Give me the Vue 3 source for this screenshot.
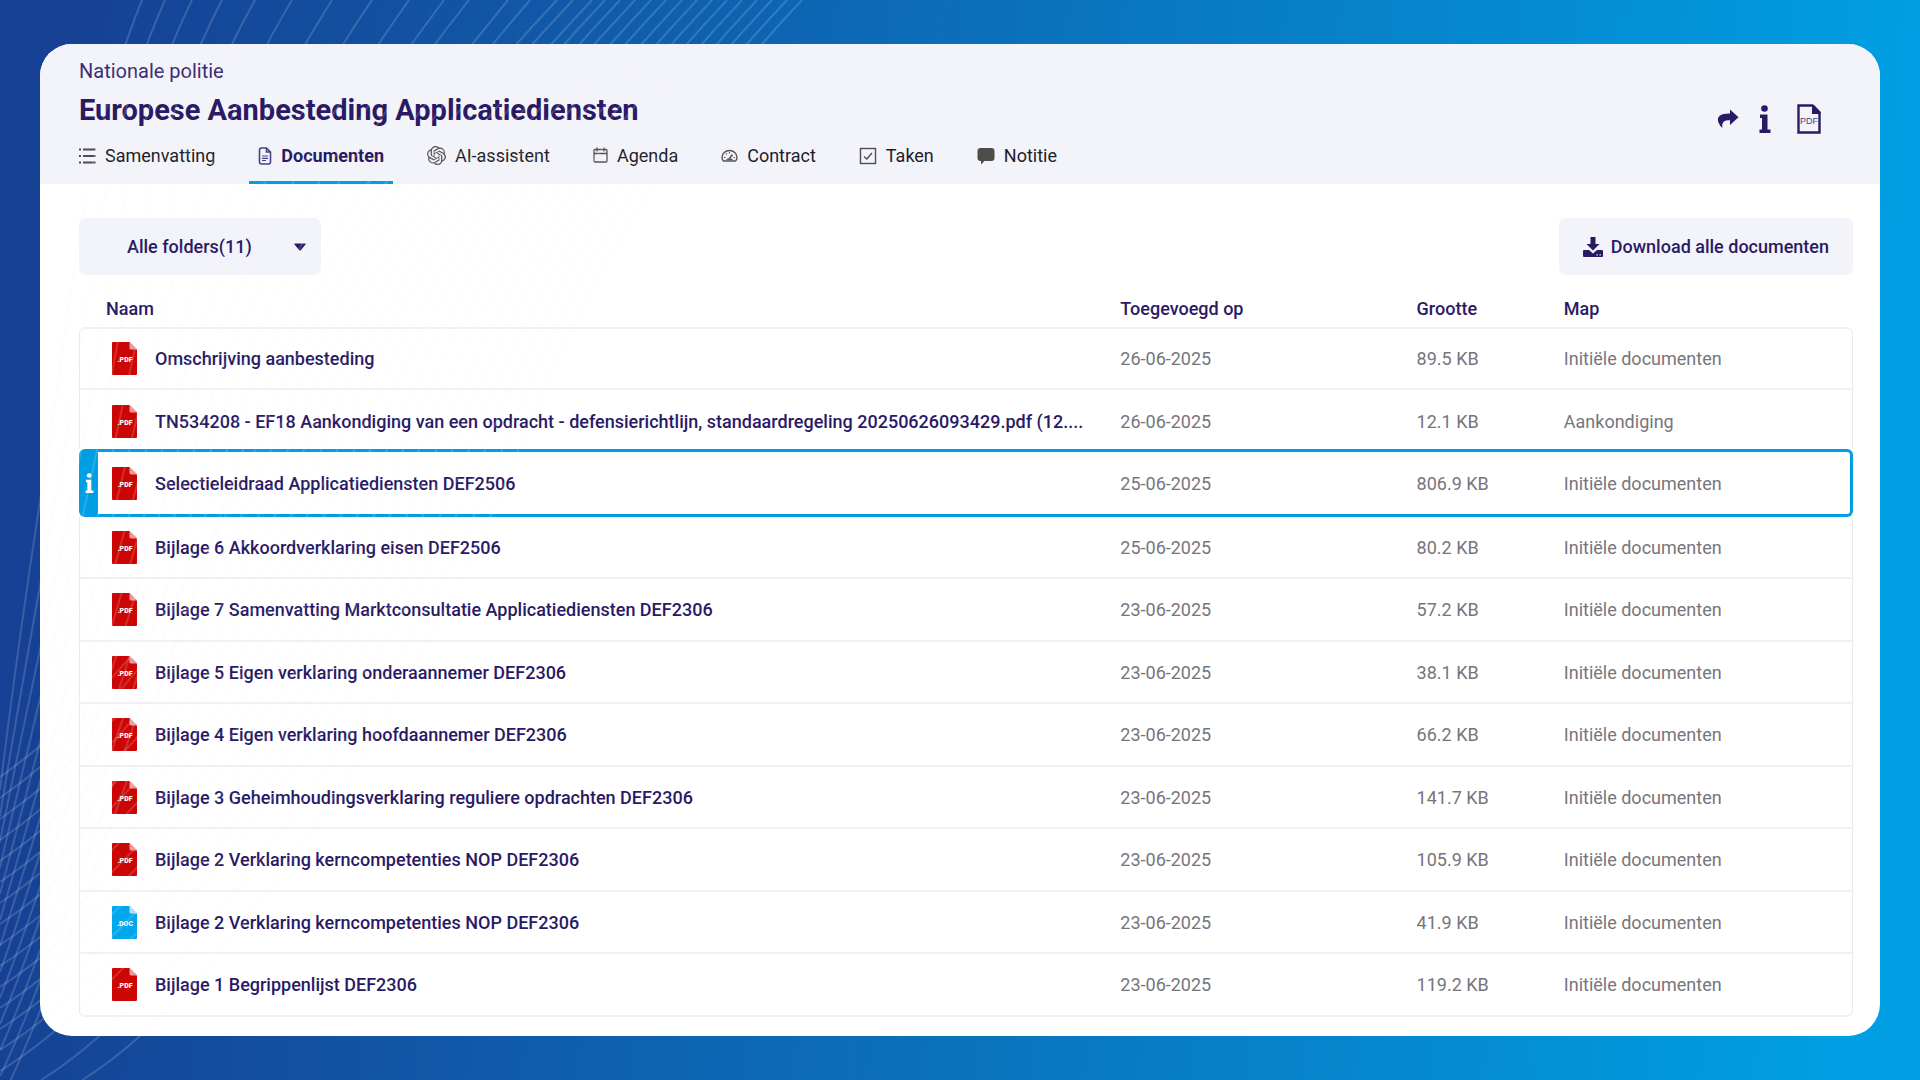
<script setup>
import { ref } from 'vue'

const folder = ref('all')

const tabs = [
  { id: 'list', label: 'Samenvatting' },
  { id: 'doc', label: 'Documenten', active: true },
  { id: 'ai', label: 'AI-assistent' },
  { id: 'agenda', label: 'Agenda' },
  { id: 'gauge', label: 'Contract' },
  { id: 'check', label: 'Taken' },
  { id: 'note', label: 'Notitie' },
]

const initial = 'Initiële documenten'
const files = [
  { name: 'Omschrijving aanbesteding', date: '26-06-2025', size: '89.5 KB', map: initial },
  { name: 'TN534208 - EF18 Aankondiging van een opdracht - defensierichtlijn, standaardregeling 20250626093429.pdf (12....', date: '26-06-2025', size: '12.1 KB', map: 'Aankondiging' },
  { name: 'Selectieleidraad Applicatiediensten DEF2506', date: '25-06-2025', size: '806.9 KB', map: initial, selected: true },
  { name: 'Bijlage 6 Akkoordverklaring eisen DEF2506', date: '25-06-2025', size: '80.2 KB', map: initial },
  { name: 'Bijlage 7 Samenvatting Marktconsultatie Applicatiediensten DEF2306', date: '23-06-2025', size: '57.2 KB', map: initial },
  { name: 'Bijlage 5 Eigen verklaring onderaannemer DEF2306', date: '23-06-2025', size: '38.1 KB', map: initial },
  { name: 'Bijlage 4 Eigen verklaring hoofdaannemer DEF2306', date: '23-06-2025', size: '66.2 KB', map: initial },
  { name: 'Bijlage 3 Geheimhoudingsverklaring reguliere opdrachten DEF2306', date: '23-06-2025', size: '141.7 KB', map: initial },
  { name: 'Bijlage 2 Verklaring kerncompetenties NOP DEF2306', date: '23-06-2025', size: '105.9 KB', map: initial },
  { name: 'Bijlage 2 Verklaring kerncompetenties NOP DEF2306', date: '23-06-2025', size: '41.9 KB', map: initial, type: 'doc' },
  { name: 'Bijlage 1 Begrippenlijst DEF2306', date: '23-06-2025', size: '119.2 KB', map: initial },
]

// Decorative fan of curves: a steep family and a flatter one that crosses it.
const steepTops = [142, 165, 192, 222, 255, 292, 332, 372, 409, 444, 469, 508, 530]
const flatTops = [557, 573, 592, 605, 620, 635, 651, 666, 682, 697, 712, 727, 742, 757, 772, 787, 802]

const steep = steepTops.map((top, i) => {
  const t = i / 12
  const mid = 48 + 195 * t
  const s0 = 0.41 + 0.45 * t
  const sm = 0.16 + 0.18 * t
  const endY = 790 + 26 * i
  const s1 = 0.12 + 0.4 * t
  return curve(top, s0, mid, sm, 0, endY, s1)
})
const flat = flatTops.map((top, i) => {
  const t = i / 16
  const mid = 255 + 263 * t
  const endX = i < 15 ? 0 : (i - 14) * 41
  const endY = i < 15 ? 777 + 21 * i : 1080
  return curve(top, 0.95, mid, 0.38, endX, endY, 1.4 + 0.25 * t)
})
const lines = [...steep, ...flat]

function curve(top, s0, mid, sm, endX, endY, s1) {
  const h = 150
  const k = (endY - 450) / 3
  const e = Math.min(k, 90)
  const pts = [
    top - s0 * h, h, mid + sm * h, 450 - h, mid, 450,
    mid - sm * k, 450 + k, endX + s1 * e, endY - e, endX, endY,
  ].map(Math.round)
  return `M${top} 0C${pts.slice(0, 6).join(' ')}C${pts.slice(6).join(' ')}`
}
</script>

<template>
  <div class="page">
    <main class="card">
      <header class="head">
        <div class="head-main">
          <p class="org">Nationale politie</p>
          <h1 class="title">Europese Aanbesteding Applicatiediensten</h1>
          <nav class="tabs">
            <a v-for="tab in tabs" :key="tab.id" href="#" class="tab" :class="{ active: tab.active }">
              <svg v-if="tab.id === 'list'" width="17" height="18" viewBox="0 0 17 18" fill="none" stroke="#4d4d52" stroke-width="2">
                <path d="M4 2.5h12.500M4 9h12.500M4 15.500h12.500" />
                <path d="M0 2.500h2M0 9h2M0 15.500h2" />
              </svg>
              <svg v-else-if="tab.id === 'doc'" width="14" height="18" viewBox="0 0 14 18" fill="none" stroke="#4a4088" stroke-width="1.6">
                <path d="M1.500 3q0-2 2-2H8.500l4 4V15q0 2-2 2h-7q-2 0-2-2zM8.500 1v4h4" />
                <path d="M4 9h6M4 11.300h6M4 13.500h4" stroke-width="1.2" />
              </svg>
              <svg v-else-if="tab.id === 'ai'" width="19" height="19" viewBox="0 0 24 24" fill="#555559">
                <path d="M22.2819 9.8211a5.9847 5.9847 0 0 0-.5157-4.9108 6.0462 6.0462 0 0 0-6.5098-2.9A6.0651 6.0651 0 0 0 4.9807 4.1818a5.9847 5.9847 0 0 0-3.9977 2.9 6.0462 6.0462 0 0 0 .7427 7.0966 5.98 5.98 0 0 0 .511 4.9107 6.051 6.051 0 0 0 6.5146 2.9001A5.9847 5.9847 0 0 0 13.2599 24a6.0557 6.0557 0 0 0 5.7718-4.2058 5.9894 5.9894 0 0 0 3.9977-2.9001 6.0557 6.0557 0 0 0-.7475-7.0729zm-9.022 12.6081a4.4755 4.4755 0 0 1-2.8764-1.0408l.1419-.0804 4.7783-2.7582a.7948.7948 0 0 0 .3927-.6813v-6.7369l2.02 1.1686a.071.071 0 0 1 .038.052v5.5826a4.504 4.504 0 0 1-4.4945 4.4944zm-9.6607-4.1254a4.4708 4.4708 0 0 1-.5346-3.0137l.142.0852 4.783 2.7582a.7712.7712 0 0 0 .7806 0l5.8428-3.3685v2.3324a.0804.0804 0 0 1-.0332.0615L9.74 19.9502a4.4992 4.4992 0 0 1-6.1408-1.6464zM2.3408 7.8956a4.485 4.485 0 0 1 2.3655-1.9728V11.6a.7664.7664 0 0 0 .3879.6765l5.8144 3.3543-2.0201 1.1685a.0757.0757 0 0 1-.071 0l-4.8303-2.7865A4.504 4.504 0 0 1 2.3408 7.872zm16.5963 3.8558L13.1038 8.364 15.1192 7.2a.0757.0757 0 0 1 .071 0l4.8303 2.7913a4.4944 4.4944 0 0 1-.6765 8.1042v-5.6772a.79.79 0 0 0-.407-.667zm2.0107-3.0231l-.142-.0852-4.7735-2.7818a.7759.7759 0 0 0-.7854 0L9.409 9.2297V6.8974a.0662.0662 0 0 1 .0284-.0615l4.8303-2.7866a4.4992 4.4992 0 0 1 6.6802 4.66zM8.3065 12.863l-2.02-1.1638a.0804.0804 0 0 1-.038-.0567V6.0742a4.4992 4.4992 0 0 1 7.3757-3.4537l-.142.0805L8.704 5.459a.7948.7948 0 0 0-.3927.6813zm1.0976-2.3654l2.602-1.4998 2.6069 1.4998v2.9994l-2.5974 1.4997-2.6067-1.4997Z" />
              </svg>
              <svg v-else-if="tab.id === 'agenda'" width="15" height="17" viewBox="0 0 15 17" fill="none" stroke="#555559" stroke-width="1.3">
                <rect x="1" y="2.500" width="13" height="12.500" rx="1" />
                <path d="M1 6.500h13M4 .5v4M11 .5v4" />
              </svg>
              <svg v-else-if="tab.id === 'gauge'" width="17" height="17" viewBox="0 0 17 17" fill="none" stroke="#555559" stroke-width="1.4">
                <path d="M2.500 14Q1 12.500 1 10.500a7.500 7 0 0 1 15 0Q16 12.500 14.500 14z" />
                <path d="M5.500 12.500h6M8 12l3.500-4.500" stroke-width="1.600" />
                <path d="M3 10.500h1.500M5 6.500l.8.800M8.500 5v1.500M12.500 10.500H14" stroke-width="1.100" />
              </svg>
              <svg v-else-if="tab.id === 'check'" width="18" height="18" viewBox="0 0 18 18" fill="none" stroke="#4d4d52" stroke-width="1.4">
                <rect x="1.500" y="1.500" width="15" height="15" />
                <path d="M5 9.500l2.800 2.500L13 6" />
              </svg>
              <svg v-else width="18" height="18" viewBox="0 0 18 18" fill="#4f4d4a">
                <path d="M3.500 1h11Q17.500 1 17.500 4v7q0 3-3 3H7.500L4 17.500V14H3.500q-3 0-3-3V4q0-3 3-3z" />
              </svg>
              <span>{{ tab.label }}</span>
            </a>
          </nav>
        </div>
        <div class="actions">
          <button type="button" class="icon-btn" aria-label="Delen">
            <svg width="22" height="20" viewBox="0 0 22 20" fill="#2a1a66">
              <path d="M13 0.500l8.500 7.700L13 16v-4.700C7.500 11 4.500 13 5.300 19C-1.500 12.500-1.500 4 13 4.500z" />
            </svg>
          </button>
          <button type="button" class="icon-btn info" aria-label="Informatie">
            <svg width="12" height="28" viewBox="0 0 12 28" fill="#2a1a66">
              <circle cx="5.500" cy="3.500" r="3.300" />
              <path d="M1 9.500H8.500V24.500H11.500V28H.5V24.500H3V13H1z" />
            </svg>
          </button>
          <button type="button" class="icon-btn" aria-label="Export als document">
            <svg width="24" height="30" viewBox="0 0 24 30">
              <path d="M1.500 1.500H15.500L22.500 8.500V28.500H1.500z" fill="none" stroke="#2a1a66" stroke-width="2.400" />
              <path d="M15 1h2l6.500 7v2H15z" fill="#2a1a66" />
              <text x="12" y="20" text-anchor="middle" class="pdf-label">PDF</text>
            </svg>
          </button>
        </div>
      </header>

      <section class="body">
        <div class="toolbar">
          <div class="select-wrap">
            <select v-model="folder" class="select" aria-label="Map kiezen">
              <option value="all">Alle folders(11)</option>
            </select>
            <svg class="caret" width="12" height="8" viewBox="0 0 12 8" fill="#2a1a66">
              <path d="M1 .5h10q1 0 .5 1L7 7Q6 8 5 7L.5 1.500Q0 .5 1 .5z" />
            </svg>
          </div>
          <button type="button" class="download">
            <svg width="20" height="20" viewBox="0 0 20 20" fill="#2a1a66">
              <path d="M7.500 0h5v7H16.500L10 13.500 3.500 7h4z" />
              <path fill-rule="evenodd" d="M1 13H6L10 16.500 14 13h5q1 0 1 1v5q0 1-1 1H1q-1 0-1-1v-5q0-1 1-1zM13.500 17.200v1.300h1.300v-1.300zM16.500 17.200v1.300h1.300v-1.300z" />
            </svg>
            <span>Download alle documenten</span>
          </button>
        </div>

        <table class="files">
          <colgroup>
            <col class="c-name" />
            <col class="c-date" />
            <col class="c-size" />
            <col />
          </colgroup>
          <thead>
            <tr>
              <th scope="col">Naam</th>
              <th scope="col">Toegevoegd op</th>
              <th scope="col">Grootte</th>
              <th scope="col">Map</th>
            </tr>
          </thead>
          <tbody>
            <tr v-for="(file, i) in files" :key="i" :class="{ selected: file.selected }">
              <td>
                <span v-if="file.selected" class="strip">
                  <svg width="9" height="20" viewBox="0 0 12 28" fill="#fff">
                    <circle cx="5.500" cy="3.500" r="3.300" />
                    <path d="M1 9.500H8.500V24.500H11.500V28H.5V24.500H3V13H1z" />
                  </svg>
                </span>
                <div class="name">
                  <svg class="file-icon" width="25" height="33" viewBox="0 0 25 33">
                    <path d="M1 0H17.500L25 7.500V32q0 1-1 1H1q-1 0-1-1V1Q0 0 1 0z" :fill="file.type === 'doc' ? '#00a7ec' : '#cc0605'" />
                    <path d="M17.500 0L25 7.500H19q-1.500 0-1.500-1.500z" :fill="file.type === 'doc' ? '#b3e3fa' : '#ee9a9a'" />
                    <text x="13" y="20" text-anchor="middle" class="ext">{{ file.type === 'doc' ? '.DOC' : '.PDF' }}</text>
                  </svg>
                  <a href="#">{{ file.name }}</a>
                </div>
              </td>
              <td>{{ file.date }}</td>
              <td>{{ file.size }}</td>
              <td>{{ file.map }}</td>
            </tr>
          </tbody>
        </table>
      </section>
    </main>

    <svg class="pattern" viewBox="0 0 1920 1080" preserveAspectRatio="xMinYMin slice" aria-hidden="true">
      <path v-for="(d, i) in lines" :key="i" :d="d" />
    </svg>
  </div>
</template>

<style>
body {
  margin: 0;
}
</style>

<style scoped>
.page {
  position: relative;
  box-sizing: border-box;
  min-height: 100vh;
  padding: 44px 40px;
  background: linear-gradient(95deg, #164194 4%, #009fe3 96%);
  font-family: Roboto, "Open Sans", sans-serif;
  font-size: 18px;
  color: #2a1a66;
}

.pattern {
  position: absolute;
  top: 0;
  left: 0;
  width: 100%;
  height: 100%;
  fill: none;
  stroke: #f2f4f8;
  stroke-width: 2;
  stroke-opacity: 0.17;
  pointer-events: none;
}

.card {
  border-radius: 32px;
  background: #fff;
  overflow: hidden;
}

.head {
  display: flex;
  justify-content: space-between;
  align-items: center;
  padding: 13px 59px 0 39px;
  background: #f3f4f9;
}

.org {
  margin: 0;
  font-size: 20px;
  line-height: 28px;
  color: #3b2d75;
}

.title {
  margin: 7px 0 0;
  font-size: 29px;
  font-weight: 700;
  line-height: 36px;
}

.tabs {
  display: flex;
  gap: 25px;
  margin-left: -9px;
}

.tab {
  display: flex;
  align-items: center;
  gap: 9px;
  box-sizing: border-box;
  height: 56px;
  padding: 2px 9px 0;
  border-bottom: 3px solid transparent;
  color: #1f1d2b;
  text-decoration: none;
}

.tab.active {
  border-color: #009fe3;
  color: #2a1a66;
  font-weight: 700;
}

.actions {
  display: flex;
  align-items: center;
  gap: 20px;
  padding-bottom: 4px;
}

.icon-btn {
  display: flex;
  padding: 0;
  border: 0;
  background: none;
}

.info {
  padding-right: 6px;
}

.body {
  padding: 34px 27px 19px 39px;
}

.toolbar {
  display: flex;
  justify-content: space-between;
}

.select-wrap {
  position: relative;
  width: 242px;
}

.select {
  width: 100%;
  height: 57px;
  padding: 0 48px;
  border: 0;
  border-radius: 6px;
  appearance: none;
  background: #f3f4f9;
  color: inherit;
  font: inherit;
  font-weight: 500;
}

.caret {
  position: absolute;
  top: 25px;
  right: 15px;
  pointer-events: none;
}

.download {
  display: flex;
  align-items: center;
  gap: 8px;
  height: 57px;
  padding: 0 24px;
  border: 0;
  border-radius: 6px;
  background: #f3f4f9;
  color: inherit;
  font: inherit;
  font-weight: 500;
}

.files {
  width: 100%;
  table-layout: fixed;
  border-collapse: separate;
  border-spacing: 0;
}

.c-name {
  width: 58.7%;
}

.c-date {
  width: 16.7%;
}

.c-size {
  width: 8.3%;
}

th {
  height: 38px;
  padding: 14px 0 0;
  text-align: left;
  font-weight: 500;
}

th:first-child {
  padding-left: 27px;
}

td {
  position: relative;
  box-sizing: border-box;
  height: 62px;
  padding: 0;
  border-bottom: 2px solid #f1f1f4;
  color: #77757c;
}

tr:nth-child(odd) td {
  height: 63px;
}

td:first-child {
  border-left: 1px solid #e9e9ee;
}

td:last-child {
  border-right: 1px solid #e9e9ee;
}

tr:first-child td {
  border-top: 2px solid #f1f1f4;
}

tr:first-child td:first-child {
  border-top-left-radius: 6px;
}

tr:first-child td:last-child {
  border-top-right-radius: 6px;
}

tr:last-child td:first-child {
  border-bottom-left-radius: 6px;
}

tr:last-child td:last-child {
  border-bottom-right-radius: 6px;
}

tr:nth-child(2) td {
  height: 59px;
  padding-top: 3px;
  border-bottom: 0;
}

tr.selected td {
  height: 68px;
  border-top: 3px solid #009fe3;
  border-bottom: 3px solid #009fe3;
}

tr.selected td:first-child {
  border-left: 1px solid #009fe3;
  border-radius: 6px 0 0 6px;
}

tr.selected td:last-child {
  border-right: 3px solid #009fe3;
  border-radius: 0 6px 6px 0;
}

.strip {
  position: absolute;
  top: 0;
  bottom: 0;
  left: 0;
  display: flex;
  align-items: center;
  justify-content: center;
  width: 18px;
  background: #009fe3;
}

.name {
  display: flex;
  align-items: center;
  gap: 18px;
  padding-left: 32px;
}

.name a {
  overflow: hidden;
  color: #2a1a66;
  font-weight: 500;
  text-decoration: none;
  white-space: nowrap;
}

.file-icon {
  flex: none;
}

.ext {
  fill: #fff;
  font-size: 7px;
  font-weight: 900;
}

.pdf-label {
  fill: #4a4088;
  font-size: 9px;
  font-weight: 500;
}
</style>
